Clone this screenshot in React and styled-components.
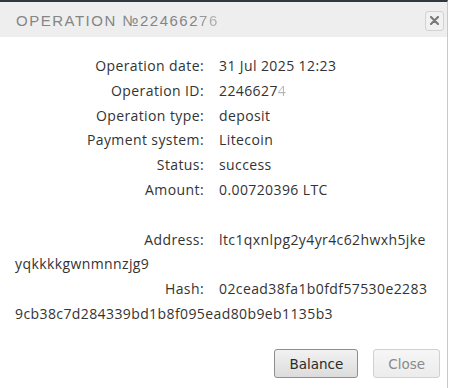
import React from 'react'
import styled, { createGlobalStyle } from 'styled-components'

const Global = createGlobalStyle`
    html, body {
        margin: 0;
        padding: 0;
        background: #ffffff;
    }
`

const Dialog = styled.div`
    width: 448px;
    height: 388px;
    box-sizing: border-box;
    border-top: 2px solid #2e3a40;
    border-right: 1px solid #c8c8c8;
    background: #fff;
    display: flex;
    flex-direction: column;
`

const Header = styled.div`
    height: 35px;
    background: #eeeeee;
    display: flex;
    align-items: center;
    justify-content: space-between;
    padding: 0 3px 0 16px;
`

const Title = styled.div`
    font-family: "Liberation Sans", Arial, sans-serif;
    font-size: 15px;
    letter-spacing: 1.5px;
    color: #858585;
    padding-top: 2px;
`

const Faded = styled.span`
    opacity: ${p => p.$o};
    filter: blur(0.6px);
`

const CloseX = styled.button`
    width: 19px;
    height: 20px;
    margin-top: 2px;
    padding: 0;
    border: 1px solid #d2d2d2;
    border-radius: 3px;
    background: #f1f1f1;
    display: flex;
    align-items: center;
    justify-content: center;
`

const Body = styled.div`
    flex: 1;
    padding: 17px 14px 0 15px;
    font-family: "Open Sans", sans-serif;
    font-size: 14px;
    letter-spacing: 0.4px;
    color: #333;
    line-height: 24.8px;
`

const Row = styled.div`
    min-height: 24.8px;
    word-break: break-all;
`

const Label = styled.span`
    display: inline-block;
    width: 189px;
    text-align: right;
    margin-right: 15px;
`

const Footer = styled.div`
    display: flex;
    justify-content: flex-end;
    gap: 15px;
    padding: 0 7px 10px 0;
`

const Button = styled.button`
    height: 29px;
    padding: 0 14px;
    font-family: "DejaVu Sans", Verdana, sans-serif;
    font-size: 13.5px;
    border-radius: 3px;
    color: ${p => (p.$muted ? '#8a8a8a' : '#2a2a2a')};
    border: 1px solid ${p => (p.$muted ? '#d0d0d0' : '#8e8e8e')};
    background: ${p => (p.$muted
        ? 'linear-gradient(#f6f6f6, #ececec)'
        : 'linear-gradient(#f2f2f2, #dcdcdc)')};
`

const rows = [
    ['Operation date:', '31 Jul 2025 12:23'],
    ['Operation ID:', <>2246627<Faded $o={0.35}>4</Faded></>],
    ['Operation type:', 'deposit'],
    ['Payment system:', 'Litecoin'],
    ['Status:', 'success'],
    ['Amount:', '0.00720396 LTC'],
    ['', ''],
    ['Address:', 'ltc1qxnlpg2y4yr4c62hwxh5jkeyqkkkkgwnmnnzjg9'],
    ['Hash:', '02cead38fa1b0fdf57530e22839cb38c7d284339bd1b8f095ead80b9eb1135b3'],
]

export default function App() {
    return (
        <>
            <Global />
            <Dialog>
                <Header>
                    <Title>
                        OPERATION №224662<Faded $o={0.8}>7</Faded><Faded $o={0.6}>6</Faded>
                    </Title>
                    <CloseX aria-label="close">
                        <svg width="9" height="9" viewBox="0 0 9 9">
                            <path d="M1 1L8 8M8 1L1 8" stroke="#7a7a7a" strokeWidth="2.2" strokeLinecap="round" />
                        </svg>
                    </CloseX>
                </Header>
                <Body>
                    {rows.map(([label, value], i) => (
                        <Row key={i}>
                            {label && <Label>{label}</Label>}
                            {value}
                        </Row>
                    ))}
                </Body>
                <Footer>
                    <Button>Balance</Button>
                    <Button $muted>Close</Button>
                </Footer>
            </Dialog>
        </>
    )
}
